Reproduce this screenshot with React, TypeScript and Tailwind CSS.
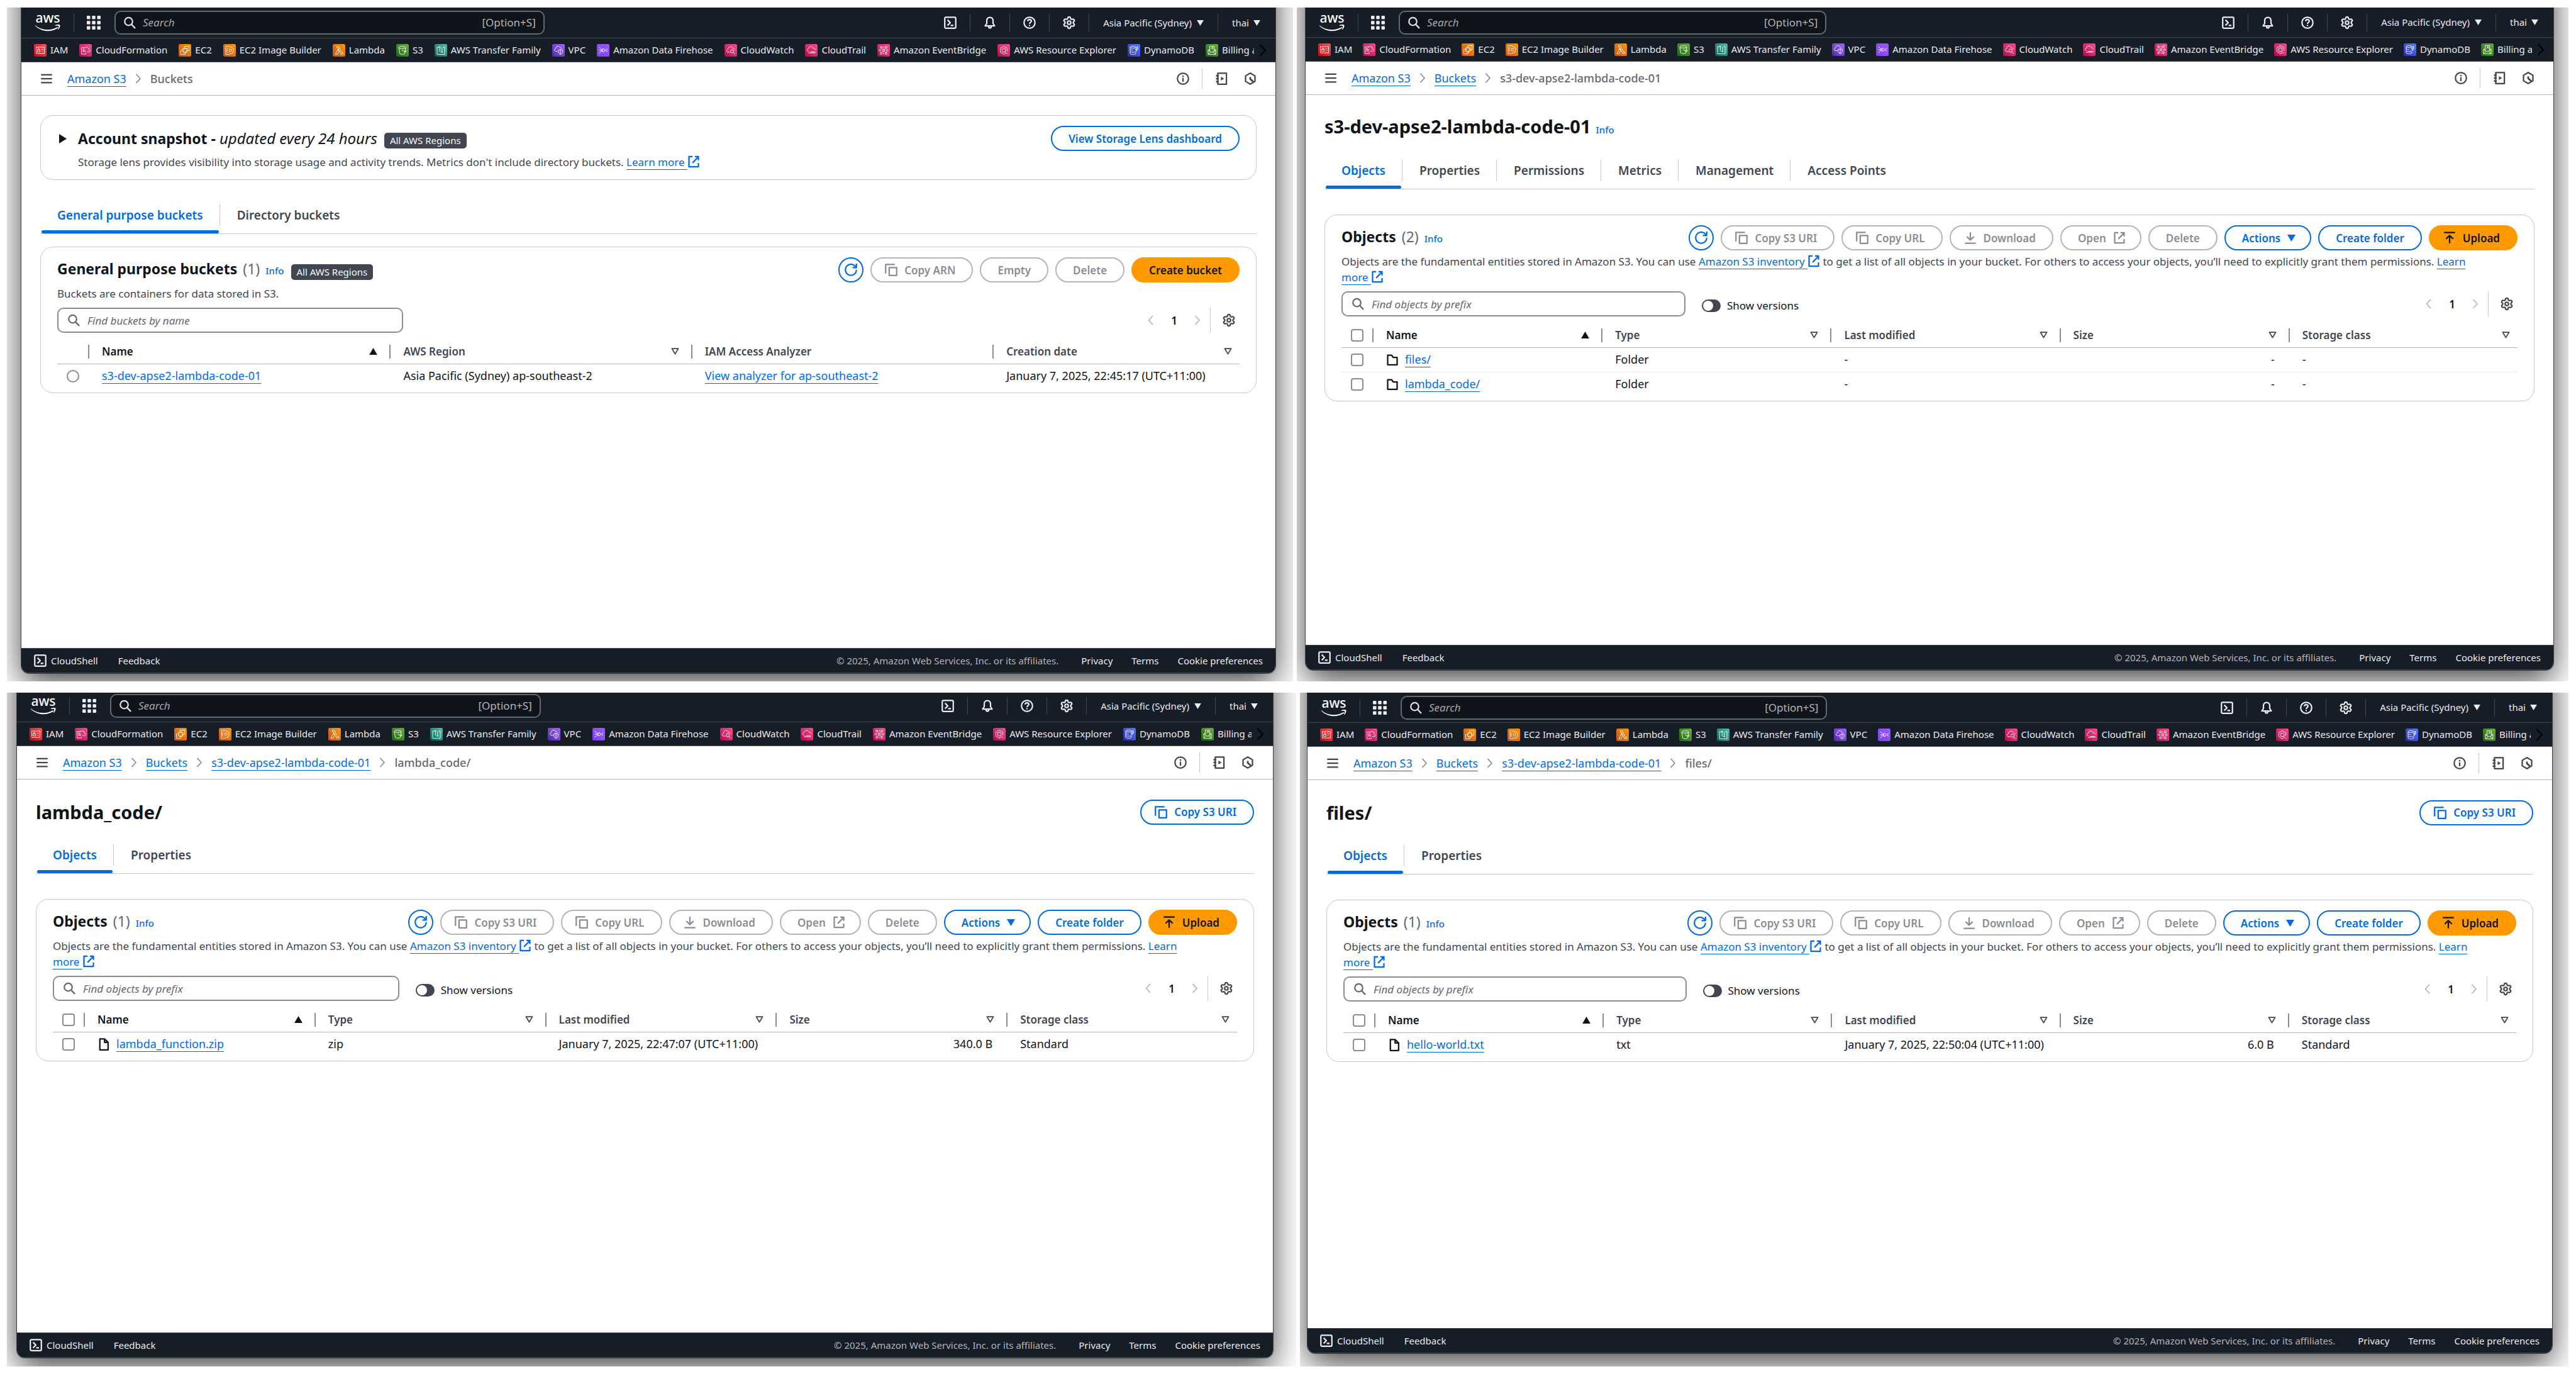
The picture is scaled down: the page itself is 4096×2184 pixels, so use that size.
import type { ReactNode } from 'react';
import { Settings } from 'lucide-react';

/* ---------- icons ---------- */

function Glyph({ children, className = 'size-5' }: { children: ReactNode; className?: string }) {
  return (
    <svg
      viewBox="0 0 16 16"
      className={`shrink-0 ${className}`}
      fill="none"
      stroke="currentColor"
      strokeWidth="1.8"
      strokeLinejoin="round"
      aria-hidden="true"
    >
      {children}
    </svg>
  );
}

const TerminalIcon = () => (
  <Glyph>
    <rect x="1" y="1" width="14" height="14" rx="1.5" />
    <path d="M4.5 4.5 8 8l-3.5 3.5M8.5 11.5h3.5" />
  </Glyph>
);
const BellIcon = () => (
  <Glyph>
    <path d="M8 1.2c-2.4 0-4 1.8-4 4.1V9L2 12h12l-2-3V5.300c0-2.300-1.600-4.100-4-4.100Z" />
    <path d="M6.300 12.500a1.700 2.200 0 0 0 3.400 0" />
  </Glyph>
);
const HelpIcon = () => (
  <Glyph>
    <circle cx="8" cy="8" r="7" />
    <path d="M5.700 6.200C5.700 4.800 6.700 4 8 4s2.300.8 2.300 2c0 1.700-2.300 1.700-2.300 3.500M8 10.700v1.600" />
  </Glyph>
);
const InfoIcon = () => (
  <Glyph>
    <circle cx="8" cy="8" r="7" />
    <path d="M8 7v5M8 4v1.700" />
  </Glyph>
);
const TutorialIcon = () => (
  <Glyph>
    <path d="M3.500 1h11v14h-11Z" />
    <path d="M1.200 4.300h3.600M1.200 8h3.600M1.200 11.700h3.600" strokeWidth="2" />
    <path d="M7.500 5.500v5L11.500 8Z" fill="currentColor" stroke="none" />
  </Glyph>
);
const HexIcon = () => (
  <Glyph>
    <path d="M8 1l6 3.500v7L8 15l-6-3.500v-7Z" />
    <path d="M8 6v2.500l4 3.500" strokeWidth="2.200" />
  </Glyph>
);
const GearIcon = () => <Settings className="size-[22px] shrink-0" strokeWidth={2.4} aria-hidden="true" />;
const SearchIcon = () => (
  <Glyph>
    <circle cx="6.800" cy="6.500" r="5" />
    <path d="m10.500 10.200 4.700 5" strokeWidth="2" />
  </Glyph>
);
const RefreshIcon = () => (
  <Glyph>
    <path d="M10 5h5V0" />
    <path d="M15 8a7 7 0 1 1-.7-3.200" />
  </Glyph>
);
const CopyIcon = () => (
  <Glyph>
    <path d="M15 5H5.500v10H15V5Z" />
    <path d="M12.500 1H1v11.500" />
  </Glyph>
);
const DownloadIcon = () => (
  <Glyph>
    <path d="M8 1v9.500M3.500 6.500 8 10.800l4.500-4.300M1 14.800h14" />
  </Glyph>
);
const UploadIcon = () => (
  <Glyph>
    <path d="M8 15V5M3.500 9.300 8 5l4.500 4.300M1 1.200h14" />
  </Glyph>
);
const ExternalIcon = ({ className = 'size-5' }: { className?: string }) => (
  <Glyph className={className}>
    <path d="M9.500 1.500H14v4.700M6.500 9.500 14 1.800" />
    <path d="M6.500 1.500H2v13h12V9.500" />
  </Glyph>
);
const FolderIcon = () => (
  <Glyph>
    <path d="M2 14.200V2h5l2 2.800h5v9.400Z" />
  </Glyph>
);
const FileIcon = () => (
  <Glyph>
    <path d="M3 15V1h6l4.500 4.500V15ZM9 1v4.500h4.500" />
  </Glyph>
);
const MenuIcon = () => (
  <Glyph>
    <path d="M1 3h14M1 8h14M1 13h14" />
  </Glyph>
);
const ChevronRight = ({ className = 'size-4' }: { className?: string }) => (
  <Glyph className={className}>
    <path d="m4.500 1 6.500 7-6.500 7" />
  </Glyph>
);
const ChevronLeft = () => (
  <Glyph className="size-4">
    <path d="m11 1-6.500 7 6.500 7" />
  </Glyph>
);
const CaretDown = ({ className = 'w-[11px] h-[9px]' }: { className?: string }) => (
  <svg viewBox="0 0 12 10" className={`shrink-0 ${className}`} aria-hidden="true">
    <path d="M0 0h12L6 10Z" fill="currentColor" />
  </svg>
);
const SortUp = () => (
  <svg viewBox="0 0 14 12" className="h-[11px] w-[13px] shrink-0 text-[#0f141a]" aria-hidden="true">
    <path d="M7 0l7 12H0Z" fill="currentColor" />
  </svg>
);
const SortNone = () => (
  <svg viewBox="0 0 14 12" className="h-[11px] w-[13px] shrink-0" aria-hidden="true">
    <path d="M1.500 1.200h11L7 10.500Z" fill="none" stroke="currentColor" strokeWidth="2" strokeLinejoin="round" />
  </svg>
);
const GridIcon = () => (
  <svg viewBox="0 0 16 16" className="size-[22px] shrink-0" fill="currentColor" aria-hidden="true">
    {[0, 6, 12].map((y) =>
      [0, 6, 12].map((x) => <rect key={`${x}-${y}`} x={x} y={y} width="4" height="4" rx="0.8" />)
    )}
  </svg>
);
const AwsLogo = () => (
  <span className="flex w-10 shrink-0 flex-col items-center text-white">
    <span className="h-[17px] text-[21px] font-medium leading-[12px]">aws</span>
    <svg viewBox="0 16 40 11" className="h-[11px] w-10" aria-hidden="true">
      <path d="M0 17c10 8.500 24 9.500 35.500 3l.8 1.500C25 29 9.500 27.500-.3 17.600Z" fill="currentColor" />
      <path d="M31.500 17.400c2.500-1.600 6.500-1.700 7.800-.6.700 1.400-.3 5.200-2.700 7.200l-.7-.4c.9-2 1.700-4.700 1.200-5.300-.7-.6-3.600-.5-5.400-.2Z" fill="currentColor" />
    </svg>
  </span>
);

/* ---------- service shortcuts ---------- */

type Service = { name: string; from: string; to: string; art: ReactNode };

const SERVICES: Service[] = [
  {
    name: 'IAM', from: '#bd0816', to: '#ff5252',
    art: (
      <>
        <rect x="3.500" y="5" width="13" height="10" />
        <rect x="5.500" y="9.500" width="4" height="3" />
        <path d="M6.300 9.500V8.300a1.200 1.200 0 0 1 2.400 0v1.200M11.500 8.500h3M11.500 11.500h1.200M13.500 11.500h1" />
      </>
    ),
  },
  {
    name: 'CloudFormation', from: '#b0084d', to: '#ff4f8b',
    art: (
      <>
        <path d="M10.500 14v2H3.500V5.500h5.500M5 8h3M5 10h5M5 12h5" />
        <path d="M12 12.500h3c1.300 0 2-.8 2-1.900 0-1-.8-1.700-1.600-1.800-.1-2.200-1.700-4-3.800-4-1.400 0-2.500.8-3 2" />
      </>
    ),
  },
  {
    name: 'EC2', from: '#c8511b', to: '#f90',
    art: (
      <>
        <path d="M9.500 5.500v-2h7v7h-2M5 9.500H3.500v7h7V14" />
        <rect x="7" y="7" width="6" height="6" />
        <path d="M8.500 7V5.700M10 7V5.700M11.500 7V5.700M8.500 14.300V13M10 14.300V13M11.500 14.300V13M5.700 8.500H7M5.700 10H7M5.700 11.500H7M13 8.500h1.300M13 10h1.300M13 11.500h1.300" />
      </>
    ),
  },
  {
    name: 'EC2 Image Builder', from: '#c8511b', to: '#f90',
    art: (
      <>
        <path d="M10 3.500H4v13h6M8 5.500c-3 2.500-3 6.500 0 9" />
        <circle cx="11" cy="10" r="2.200" />
        <path d="M10 5.500 11 4l1.500 1.500L14 5l.6 1.800 1.600.7-.5 1.500 1 1-1 1.200.5 1.500-1.600.8L14 15.300l-1.500-.6L11 16l-1-1.500" />
      </>
    ),
  },
  {
    name: 'Lambda', from: '#c8511b', to: '#f90',
    art: <path d="M4 16.500 8.300 8 10 11.500 7.500 16.500ZM6.500 3.500h3.200l5 10.300 1.300-.5.800 2-3.300 1.300L8.200 5.800H6.500Z" />,
  },
  {
    name: 'S3', from: '#1b660f', to: '#6cae3e',
    art: (
      <>
        <ellipse cx="9.500" cy="5.500" rx="5.500" ry="1.800" />
        <path d="M4 5.500 5.500 15c1.500 1.800 6.500 1.800 8 0L15 5.500M9 9.500c2.500 2 6 3.200 7 2.600.5-.6-.8-1.600-1.800-2.300" />
      </>
    ),
  },
  {
    name: 'AWS Transfer Family', from: '#055f4e', to: '#56c0a7',
    art: (
      <>
        <path d="M7 5H4v11.500h12V5h-3" />
        <path d="M8.300 12.500V4M6.800 5.500 8.300 3.800l1.500 1.700M11.700 5.500v8M10.200 12l1.500 1.700L13.200 12" />
      </>
    ),
  },
  {
    name: 'VPC', from: '#4d27aa', to: '#a166ff',
    art: (
      <>
        <path d="M8.500 11.500H6c-1.700 0-2.500-1-2.500-2.200 0-1.200 1-2 2-2.100C5.700 5 7.300 3.500 9.300 3.500c1.800 0 3 1.200 3.500 2.500 1.500 0 2.200.7 2.500 1.500" />
        <path d="M13 8.500 16.300 9.800v2.700c0 2-1.500 3.300-3.300 4-1.800-.7-3.300-2-3.300-4V9.800ZM13 8.500v8" />
      </>
    ),
  },
  {
    name: 'Amazon Data Firehose', from: '#7c3ff2', to: '#9a5cff',
    art: (
      <>
        <path d="M3.500 5.500c2.500 0 3 3.500 5.500 4.500M3.500 14.500c2.500 0 3-3.500 5.500-4.500M3.500 10H8" />
        <path d="M9 7.700h2.500l1.500 2.300-1.500 2.300H9ZM14 9.500l3-1.500M14 10.500l3 1.500" />
      </>
    ),
  },
  {
    name: 'CloudWatch', from: '#b0084d', to: '#ff4f8b',
    art: (
      <>
        <path d="M8.500 13H6c-1.700 0-2.700-1-2.700-2.300s1-2.200 2.200-2.200C5.700 6 7.300 4 9.500 4c2 0 3.300 1.300 3.800 3 1.500.1 2.700 1 3 2.500" />
        <circle cx="12" cy="11.500" r="2.500" />
        <path d="m14 13.500 2.300 2.700" />
      </>
    ),
  },
  {
    name: 'CloudTrail', from: '#b0084d', to: '#ff4f8b',
    art: <path d="M6 11.500c-1.700 0-2.700-.8-2.700-2S4.300 7.500 5.500 7.400C5.700 5.500 7.300 4 9.500 4c2 0 3.300 1.200 3.800 2.800 2 .1 3.300 1.200 3.300 2.700M5 14h10.500c1 0 1.300-1.500 0-1.500H8.500" />,
  },
  {
    name: 'Amazon EventBridge', from: '#b0084d', to: '#ff4f8b',
    art: (
      <>
        <circle cx="6" cy="5" r="1.500" /><circle cx="14" cy="5" r="1.500" />
        <circle cx="10" cy="10" r="1.500" /><circle cx="4.500" cy="10" r="1.500" /><circle cx="15.500" cy="10" r="1.500" />
        <circle cx="6" cy="15" r="1.500" /><circle cx="14" cy="15" r="1.500" />
        <path d="M7 6.200 9 8.800M13 6.200l-2 2.600M9 11.200 7 13.800M11 11.200l2 2.600M10 3.500v3M10 13.500v3" />
      </>
    ),
  },
  {
    name: 'AWS Resource Explorer', from: '#b0084d', to: '#ff4f8b',
    art: (
      <>
        <path d="M13 14.500 10 16.300 4.500 13V6.700L10 3.500l5.500 3.200V12" />
        <circle cx="10" cy="10" r="3" />
        <path d="m12.200 12.200 3.500 4" />
      </>
    ),
  },
  {
    name: 'DynamoDB', from: '#2e27ad', to: '#527fff',
    art: (
      <>
        <ellipse cx="8.500" cy="5" rx="4.500" ry="1.500" />
        <path d="M4 5v10c0 .8 2 1.500 4.500 1.500S13 15.800 13 15v-2M4 8.300c0 .8 2 1.500 4.500 1.500M4 11.700c0 .8 2 1.500 4.500 1.500 1.500 0 3-.3 3.700-.7" />
        <path d="M14.500 4.500 12.500 8.500h1.700l-1 3.500 3.500-4.800h-1.800l1.300-2.700Z" />
      </>
    ),
  },
  {
    name: 'Billing and', from: '#1b660f', to: '#6cae3e',
    art: (
      <>
        <path d="M4 9.500v7h12v-7l-2-1M4 9.500l2-1M4 10l6 3.500 6-3.500M4 16.500l4.500-4M16 16.500l-4.500-4" />
        <path d="M6.500 11V3.500h7V11M8.500 8.500l3-3M9.300 5.500h2.200v2.200" />
      </>
    ),
  },
];

function ServiceIcon({ service, gradientId }: { service: Service; gradientId: string }) {
  return (
    <svg viewBox="0 0 20 20" className="size-5 shrink-0" aria-hidden="true">
      <defs>
        <linearGradient id={gradientId} x1="0" y1="1" x2="1" y2="0">
          <stop offset="0" stopColor={service.from} />
          <stop offset="1" stopColor={service.to} />
        </linearGradient>
      </defs>
      <rect width="20" height="20" rx="2.500" fill={`url(#${gradientId})`} />
      <g fill="none" stroke="#fff" strokeWidth="0.9" strokeLinejoin="round">
        {service.art}
      </g>
    </svg>
  );
}

/* ---------- small parts ---------- */

const LINK = 'text-[#006ce0] underline decoration-1 underline-offset-[5px]';
const INLINE_ICON = 'inline-block size-5 align-[-3px]';

function Link({ children }: { children: ReactNode }) {
  return (
    <a href="#" className={LINK}>
      {children}
    </a>
  );
}

function ExternalLink({ children }: { children: ReactNode }) {
  return (
    <a href="#" className={LINK}>
      {children} <ExternalIcon className={INLINE_ICON} />
    </a>
  );
}

const InfoLink = () => (
  <a href="#" className="text-[15px] font-medium text-[#006ce0]">
    Info
  </a>
);

const RegionBadge = () => (
  <span className="block rounded-[5px] bg-[#424650] px-[9px] text-[15px] leading-[25px] text-[#f9f9fa]">All AWS Regions</span>
);

type Tone = 'normal' | 'disabled' | 'primary';

const TONES: Record<Tone, string> = {
  normal: 'border-[#006ce0] text-[#006ce0] bg-white',
  disabled: 'border-[#b4b4bb] text-[#8c8c94] bg-white',
  primary: 'border-[#ff9900] bg-[#ff9900] text-[#0f141a]',
};

function Button({ tone = 'normal', icon, after, children }: { tone?: Tone; icon?: ReactNode; after?: ReactNode; children: ReactNode }) {
  const start = icon ? 'pl-[21px]' : 'pl-[26px]';
  const end = after ? 'pr-[23px]' : 'pr-[26px]';
  return (
    <button
      type="button"
      disabled={tone === 'disabled'}
      className={`flex h-10 items-center gap-[11px] whitespace-nowrap rounded-full border-2 text-[17px] font-semibold ${start} ${end} ${TONES[tone]}`}
    >
      {icon}
      {children}
      {after}
    </button>
  );
}

const RefreshButton = () => (
  <button type="button" aria-label="Refresh" className="flex size-10 items-center justify-center rounded-full border-2 border-[#006ce0] text-[#006ce0]">
    <RefreshIcon />
  </button>
);

function FilterInput({ placeholder }: { placeholder: string }) {
  return (
    <label className="flex h-10 w-[29.250%] items-center gap-3 rounded-[10px] border-2 border-[#8c8c94] px-[14px] text-[#656871]">
      <SearchIcon />
      <input
        type="search"
        aria-label={placeholder}
        placeholder={placeholder}
        className="min-w-0 flex-1 bg-transparent text-[17px] italic text-[#0f141a] outline-none placeholder:text-[#656871]"
      />
    </label>
  );
}

const Pagination = () => (
  <div className="ml-auto flex h-10 items-center pr-[6px]">
    <button type="button" aria-label="Previous page" className="text-[#b4b4bb]">
      <ChevronLeft />
    </button>
    <button type="button" className="mx-6 text-[17px] font-semibold text-[#0f141a]">
      1
    </button>
    <button type="button" aria-label="Next page" className="text-[#b4b4bb]">
      <ChevronRight />
    </button>
    <span className="ml-3 mr-[18px] h-10 w-px bg-[#c6c6cd]" />
    <button type="button" aria-label="Preferences" className="text-[#424650]">
      <GearIcon />
    </button>
  </div>
);

function Tabs({ items }: { items: string[] }) {
  return (
    <nav role="tablist" className="flex h-[55px] items-stretch border-b border-[#c6c6cd]">
      {items.map((item, i) => (
        <button
          key={item}
          type="button"
          role="tab"
          aria-selected={i === 0}
          className={`relative flex items-center px-[27px] pb-[3px] text-[19px] font-semibold ${i === 0 ? 'text-[#006ce0]' : 'text-[#424650]'}`}
        >
          {item}
          {i === 0 && <span className="absolute inset-x-[2px] bottom-0 h-[5px] rounded-[3px] bg-[#006ce0]" />}
          {i < items.length - 1 && <span className="absolute right-0 top-2 h-[34px] w-px bg-[#c6c6cd]" />}
        </button>
      ))}
    </nav>
  );
}

function Card({ children, className = '' }: { children: ReactNode; className?: string }) {
  return (
    <section className={`rounded-[20px] border border-[#c6c6cd] px-[26px] pt-4 text-[17px] leading-[25px] ${className}`}>
      {children}
    </section>
  );
}

/* ---------- tables ---------- */

function HeadCell({ label, sort, width = '' }: { label: string; sort?: 'up' | 'none'; width?: string }) {
  return (
    <th className={`group p-0 text-left ${width}`}>
      <div className="flex h-[22px] items-center justify-between border-l-2 border-[#8c8c94] pl-[20px] pr-[19px] group-last:pr-3">
        <span className={sort === 'up' ? 'font-semibold text-[#0f141a]' : 'font-semibold'}>{label}</span>
        {sort === 'up' && <SortUp />}
        {sort === 'none' && <SortNone />}
      </div>
    </th>
  );
}

const Check = ({ label }: { label: string }) => (
  <input type="checkbox" aria-label={label} className="ml-[15px] block size-5 appearance-none rounded-[4px] border-2 border-[#8c8c94] bg-white" />
);

type ObjectRow = { name: string; kind: 'folder' | 'file'; type: string; modified: string; size: string; storage: string };

function ObjectsTable({ rows }: { rows: ObjectRow[] }) {
  return (
    <table className="mt-[11px] w-full table-fixed border-collapse">
      <thead>
        <tr className="h-[38px] border-b border-[#b4b4bb] text-[#424650]">
          <th className="w-[49px] p-0">
            <Check label="Select all" />
          </th>
          <HeadCell label="Name" sort="up" />
          <HeadCell label="Type" sort="none" />
          <HeadCell label="Last modified" sort="none" />
          <HeadCell label="Size" sort="none" />
          <HeadCell label="Storage class" sort="none" />
        </tr>
      </thead>
      <tbody className="text-[18px]">
        {rows.map((row) => (
          <tr key={row.name} className="h-[39px] border-b border-[#ebebf0] text-[#0f141a] last:border-0">
            <td className="p-0">
              <Check label={`Select ${row.name}`} />
            </td>
            <td className="p-0 pl-[22px]">
              <span className="flex items-center gap-[10px]">
                {row.kind === 'folder' ? <FolderIcon /> : <FileIcon />}
                <Link>{row.name}</Link>
              </span>
            </td>
            <td className="p-0 pl-[22px]">{row.type}</td>
            <td className="p-0 pl-[22px]">{row.modified}</td>
            <td className="p-0 pr-[22px] text-right">{row.size}</td>
            <td className="p-0 pl-[22px]">{row.storage}</td>
          </tr>
        ))}
      </tbody>
    </table>
  );
}

function ObjectsCard({ rows }: { rows: ObjectRow[] }) {
  return (
    <Card className="mt-10 pb-[7px]">
      <div className="flex items-center gap-[11px]">
        <h2 className="flex items-baseline gap-[9px] text-[23px] font-bold text-[#0f141a]">
          Objects <span className="font-normal text-[#656871]">({rows.length})</span> <InfoLink />
        </h2>
        <div className="ml-auto flex gap-[11px]">
          <RefreshButton />
          <Button tone="disabled" icon={<CopyIcon />}>Copy S3 URI</Button>
          <Button tone="disabled" icon={<CopyIcon />}>Copy URL</Button>
          <Button tone="disabled" icon={<DownloadIcon />}>Download</Button>
          <Button tone="disabled" after={<ExternalIcon />}>Open</Button>
          <Button tone="disabled">Delete</Button>
          <Button after={<CaretDown className="h-[11px] w-[13px]" />}>Actions</Button>
          <Button>Create folder</Button>
          <Button tone="primary" icon={<UploadIcon />}>Upload</Button>
        </div>
      </div>
      <p className="mt-[5px] text-[#424650]">
        Objects are the fundamental entities stored in Amazon S3. You can use <ExternalLink>Amazon S3 inventory</ExternalLink> to get a
        list of all objects in your bucket. For others to access your objects, you’ll need to explicitly grant them permissions.{' '}
        <a href="#" className={LINK}>
          Learn
          <br />
          more <ExternalIcon className={INLINE_ICON} />
        </a>
      </p>
      <div className="mt-[10px] flex items-center">
        <FilterInput placeholder="Find objects by prefix" />
        <label className="ml-[26px] flex items-center gap-[10px] pt-[5px] text-[#0f141a]">
          <input
            type="checkbox"
            role="switch"
            className="flex h-5 w-[30px] appearance-none items-center rounded-full bg-[#424650] pl-[2px] before:size-4 before:rounded-full before:bg-white"
          />
          Show versions
        </label>
        <Pagination />
      </div>
      <ObjectsTable rows={rows} />
    </Card>
  );
}

/* ---------- window chrome ---------- */

const NavDivider = () => <span className="h-7 w-px bg-[#424650]" />;

function NavIcon({ label, children }: { label: string; children: ReactNode }) {
  return (
    <>
      <button type="button" aria-label={label} className="flex w-[62px] justify-center">
        {children}
      </button>
      <NavDivider />
    </>
  );
}

function TopBar({ className }: { className: string }) {
  return (
    <div className={`flex items-center border-b border-[#424650] pl-[22px] pr-6 text-[#ebebf0] ${className}`}>
      <AwsLogo />
      <span className="ml-[21px] mr-5 h-7 w-px bg-[#424650]" />
      <button type="button" aria-label="All services">
        <GridIcon />
      </button>
      <label className="ml-[22px] flex h-[38px] w-[35.100%] items-center gap-[11px] rounded-[10px] border-2 border-[#656871] bg-[#0f141a] px-3 text-[17px] text-[#b4b4bb]">
        <span className="text-[#dedee3]">
          <SearchIcon />
        </span>
        <input type="search" aria-label="Search" placeholder="Search" className="min-w-0 flex-1 bg-transparent italic outline-none placeholder:text-[#a4a4ad]" />
        <span>[Option+S]</span>
      </label>
      <div className="ml-auto flex items-center text-[15px]">
        <NavIcon label="CloudShell"><TerminalIcon /></NavIcon>
        <NavIcon label="Notifications"><BellIcon /></NavIcon>
        <NavIcon label="Help"><HelpIcon /></NavIcon>
        <NavIcon label="Settings"><GearIcon /></NavIcon>
        <button type="button" className="flex items-center gap-2 px-[22px]">
          Asia Pacific (Sydney) <CaretDown />
        </button>
        <NavDivider />
        <button type="button" className="flex items-center gap-[7px] pl-[22px]">
          thai <CaretDown />
        </button>
      </div>
    </div>
  );
}

function ServiceBar({ id, gap }: { id: string; gap: string }) {
  return (
    <div className="flex h-[38px] items-center border-b border-[#424650] pl-5 pr-[10px] text-[15px] text-[#ebebf0]">
      <div className={`flex min-w-0 flex-1 overflow-hidden whitespace-nowrap ${gap}`}>
        {SERVICES.map((service, i) => (
          <a key={service.name} href="#" className="flex items-center gap-[6px]">
            <ServiceIcon service={service} gradientId={`${id}-${i}`} />
            {service.name}
          </a>
        ))}
      </div>
      <button type="button" aria-label="More shortcuts" className="ml-1 text-black">
        <ChevronRight className="size-5" />
      </button>
    </div>
  );
}

function CrumbBar({ trail }: { trail: string[] }) {
  const last = trail.length - 1;
  return (
    <div className="flex h-[53px] items-center border-b border-[#b4b4bb] px-[30px] text-[18px] text-[#424650]">
      <button type="button" aria-label="Open navigation" className="mr-[23px]">
        <MenuIcon />
      </button>
      <nav aria-label="Breadcrumbs" className="flex items-center gap-[11px]">
        {trail.map((crumb, i) => (
          <span key={crumb} className="flex items-center gap-[11px]">
            {i === last ? <span className="font-medium text-[#656871]">{crumb}</span> : <Link>{crumb}</Link>}
            {i < last && (
              <span className="text-[#8c8c94]">
                <ChevronRight />
              </span>
            )}
          </span>
        ))}
      </nav>
      <div className="ml-auto flex items-center">
        <button type="button" aria-label="Info"><InfoIcon /></button>
        <span className="mx-5 h-8 w-px bg-[#c6c6cd]" />
        <button type="button" aria-label="Tutorials"><TutorialIcon /></button>
        <button type="button" aria-label="Diagnostics" className="ml-[26px]"><HexIcon /></button>
      </div>
    </div>
  );
}

const Footer = () => (
  <footer className="flex h-10 items-center border-y border-[#424650] bg-[#161d26] px-5 text-[15px] text-[#ebebf0]">
    <button type="button" className="flex items-center gap-[7px]">
      <TerminalIcon /> CloudShell
    </button>
    <a href="#" className="ml-8">Feedback</a>
    <span className="ml-auto text-[#b4b4bb]">© 2025, Amazon Web Services, Inc. or its affiliates.</span>
    <a href="#" className="ml-9">Privacy</a>
    <a href="#" className="ml-[30px]">Terms</a>
    <a href="#" className="ml-[30px]">Cookie preferences</a>
  </footer>
);

type WindowProps = { id: string; panel: string; topBar?: string; gap?: string; trail: string[]; children: ReactNode };

function ConsoleWindow({ id, panel, topBar = 'h-[49px]', gap = 'gap-[18px]', trail, children }: WindowProps) {
  return (
    <div className={`flex min-w-0 overflow-hidden ${panel}`}>
      <div className="relative flex min-w-0 flex-1 before:absolute before:inset-x-0 before:-top-40 before:bottom-0 before:rounded-b-[12px] before:shadow-[0_15px_52px_rgba(0,0,0,0.75),0_0_0_1px_rgba(0,0,0,0.6)]">
        <div className="relative flex min-w-0 flex-1 flex-col overflow-hidden rounded-b-[12px] bg-white">
          <header className="bg-[#161d26]">
            <TopBar className={topBar} />
            <ServiceBar id={id} gap={gap} />
          </header>
          <CrumbBar trail={trail} />
          <main className="flex-1 px-[30px]">{children}</main>
          <Footer />
        </div>
      </div>
    </div>
  );
}

/* ---------- pages ---------- */

const BucketsPage = () => (
  <>
    <Card className="mt-[31px] pb-[15px]">
      <div className="flex h-10 items-center">
        <button type="button" aria-label="Expand" className="ml-[3px] mr-[18px] text-[#0f141a]">
          <svg viewBox="0 0 12 15" className="h-[15px] w-3" aria-hidden="true">
            <path d="M0 0 12 7.500 0 15Z" fill="currentColor" />
          </svg>
        </button>
        <h2 className="text-[23px] font-bold text-[#0f141a]">
          Account snapshot - <em className="text-[24px] font-normal">updated every 24 hours</em>
        </h2>
        <span className="ml-[11px] mt-[6px]">
          <RegionBadge />
        </span>
        <div className="ml-auto">
          <Button>View Storage Lens dashboard</Button>
        </div>
      </div>
      <p className="ml-[33px] mt-[5px] text-[#424650]">
        Storage lens provides visibility into storage usage and activity trends. Metrics don't include directory buckets.{' '}
        <ExternalLink>Learn more</ExternalLink>
      </p>
    </Card>
    <div className="mt-[31px]">
      <Tabs items={['General purpose buckets', 'Directory buckets']} />
    </div>
    <Card className="mt-5 pb-[7px]">
      <div className="flex items-center">
        <h2 className="flex items-baseline gap-[9px] text-[23px] font-bold text-[#0f141a]">
          General purpose buckets <span className="font-normal text-[#656871]">(1)</span> <InfoLink />
        </h2>
        <span className="ml-[11px] mt-[6px]">
          <RegionBadge />
        </span>
        <div className="ml-auto flex gap-[11px]">
          <RefreshButton />
          <Button tone="disabled" icon={<CopyIcon />}>Copy ARN</Button>
          <Button tone="disabled">Empty</Button>
          <Button tone="disabled">Delete</Button>
          <Button tone="primary">Create bucket</Button>
        </div>
      </div>
      <p className="mt-[5px] text-[#424650]">Buckets are containers for data stored in S3.</p>
      <div className="mt-[10px] flex items-center">
        <FilterInput placeholder="Find buckets by name" />
        <Pagination />
      </div>
      <table className="mt-[11px] w-full table-fixed border-collapse">
        <thead>
          <tr className="h-[38px] border-b border-[#b4b4bb] text-[#424650]">
            <th className="w-[49px] p-0" aria-label="Selection" />
            <HeadCell label="Name" sort="up" width="w-[25.500%]" />
            <HeadCell label="AWS Region" sort="none" width="w-[25.500%]" />
            <HeadCell label="IAM Access Analyzer" width="w-[25.500%]" />
            <HeadCell label="Creation date" sort="none" />
          </tr>
        </thead>
        <tbody className="text-[18px]">
          <tr className="h-[39px] text-[#0f141a]">
            <td className="p-0">
              <input type="radio" name="bucket" aria-label="Select s3-dev-apse2-lambda-code-01" className="ml-[15px] block size-5 appearance-none rounded-full border-2 border-[#8c8c94]" />
            </td>
            <td className="p-0 pl-[22px]"><Link>s3-dev-apse2-lambda-code-01</Link></td>
            <td className="p-0 pl-[22px]">Asia Pacific (Sydney) ap-southeast-2</td>
            <td className="p-0 pl-[22px]"><Link>View analyzer for ap-southeast-2</Link></td>
            <td className="p-0 pl-[22px]">January 7, 2025, 22:45:17 (UTC+11:00)</td>
          </tr>
        </tbody>
      </table>
    </Card>
  </>
);

type ObjectsPageProps = { title: string; info?: boolean; copy?: boolean; tabs: string[]; rows: ObjectRow[] };

const ObjectsPage = ({ title, info, copy, tabs, rows }: ObjectsPageProps) => (
  <>
    <div className="mb-[23px] mt-8 flex h-10 items-center justify-between">
      <h1 className="flex items-baseline gap-2 text-[29px] font-bold leading-10 text-[#0f141a]">
        {title} {info && <InfoLink />}
      </h1>
      {copy && <Button icon={<CopyIcon />}>Copy S3 URI</Button>}
    </div>
    <Tabs items={tabs} />
    <ObjectsCard rows={rows} />
  </>
);

const folder = (name: string): ObjectRow => ({ name, kind: 'folder', type: 'Folder', modified: '-', size: '-', storage: '-' });

export default function App() {
  return (
    <div className="grid min-h-screen grid-rows-2 gap-[18px] bg-white py-3 pl-[11px] pr-3 font-['Noto_Sans',sans-serif]">
      <div className="grid grid-cols-[2045fr_2022fr] gap-[6px]">
        <ConsoleWindow id="buckets" panel="pl-[23px] pr-7 pb-[13px]" trail={['Amazon S3', 'Buckets']}>
          <BucketsPage />
        </ConsoleWindow>
        <ConsoleWindow
          id="bucket"
          panel="pl-[14px] pr-6 pb-[18px]"
          topBar="h-[48px]"
          gap="gap-[17px]"
          trail={['Amazon S3', 'Buckets', 's3-dev-apse2-lambda-code-01']}
        >
          <ObjectsPage
            title="s3-dev-apse2-lambda-code-01"
            info
            tabs={['Objects', 'Properties', 'Permissions', 'Metrics', 'Management', 'Access Points']}
            rows={[folder('files/'), folder('lambda_code/')]}
          />
        </ConsoleWindow>
      </div>
      <div className="grid grid-cols-[2050fr_2017fr] gap-[6px]">
        <ConsoleWindow
          id="code"
          panel="pl-4 pr-[37px] pb-[14px]"
          topBar="h-[47px] pb-1"
          trail={['Amazon S3', 'Buckets', 's3-dev-apse2-lambda-code-01', 'lambda_code/']}
        >
          <ObjectsPage
            title="lambda_code/"
            copy
            tabs={['Objects', 'Properties']}
            rows={[{ name: 'lambda_function.zip', kind: 'file', type: 'zip', modified: 'January 7, 2025, 22:47:07 (UTC+11:00)', size: '340.0 B', storage: 'Standard' }]}
          />
        </ConsoleWindow>
        <ConsoleWindow
          id="files"
          panel="pl-3 pr-[26px] pb-[21px]"
          topBar="h-[48px]"
          gap="gap-[17px]"
          trail={['Amazon S3', 'Buckets', 's3-dev-apse2-lambda-code-01', 'files/']}
        >
          <ObjectsPage
            title="files/"
            copy
            tabs={['Objects', 'Properties']}
            rows={[{ name: 'hello-world.txt', kind: 'file', type: 'txt', modified: 'January 7, 2025, 22:50:04 (UTC+11:00)', size: '6.0 B', storage: 'Standard' }]}
          />
        </ConsoleWindow>
      </div>
    </div>
  );
}
